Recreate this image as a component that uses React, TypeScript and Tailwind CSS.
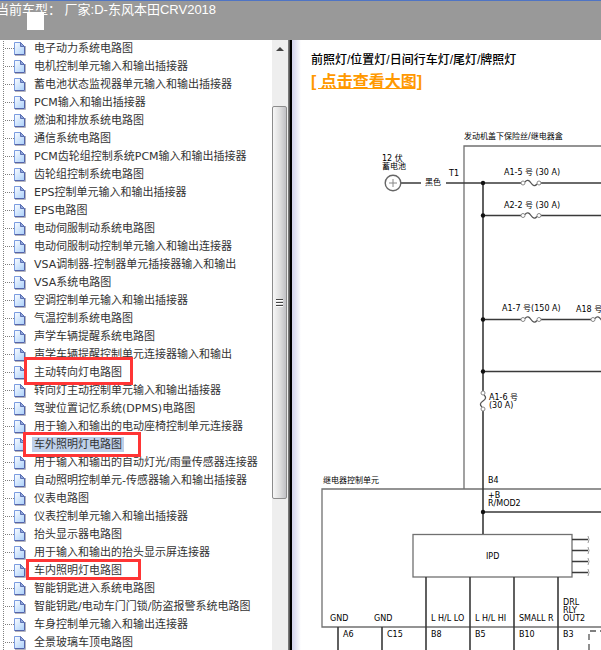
import React, { useState } from "react";
import clsx from "clsx";

type TreeItem = {
  id: number;
  text: string;
  mark?: string;
};

const treeItems: TreeItem[] = [
  { id: 1, text: "电子动力系统电路图" },
  { id: 2, text: "电机控制单元输入和输出插接器" },
  { id: 3, text: "蓄电池状态监视器单元输入和输出插接器" },
  { id: 4, text: "PCM输入和输出插接器" },
  { id: 5, text: "燃油和排放系统电路图" },
  { id: 6, text: "通信系统电路图" },
  { id: 7, text: "PCM齿轮组控制系统PCM输入和输出插接器" },
  { id: 8, text: "齿轮组控制系统电路图" },
  { id: 9, text: "EPS控制单元输入和输出插接器" },
  { id: 10, text: "EPS电路图" },
  { id: 11, text: "电动伺服制动系统电路图" },
  { id: 12, text: "电动伺服制动控制单元输入和输出连接器" },
  { id: 13, text: "VSA调制器-控制器单元插接器输入和输出" },
  { id: 14, text: "VSA系统电路图" },
  { id: 15, text: "空调控制单元输入和输出插接器" },
  { id: 16, text: "气温控制系统电路图" },
  { id: 17, text: "声学车辆提醒系统电路图" },
  { id: 18, text: "声学车辆提醒控制单元连接器输入和输出" },
  {
    id: 19,
    text: "主动转向灯电路图",
    mark: "left-6 -top-1.5 w-[109px] h-7",
  },
  { id: 20, text: "转向灯主动控制单元输入和输出插接器" },
  { id: 21, text: "驾驶位置记忆系统(DPMS)电路图" },
  { id: 22, text: "用于输入和输出的电动座椅控制单元连接器" },
  {
    id: 23,
    text: "车外照明灯电路图",
    mark: "left-[23px] -top-[3px] w-[118px] h-[25px]",
  },
  { id: 24, text: "用于输入和输出的自动灯光/雨量传感器连接器" },
  { id: 25, text: "自动照明控制单元-传感器输入和输出插接器" },
  { id: 26, text: "仪表电路图" },
  { id: 27, text: "仪表控制单元输入和输出插接器" },
  { id: 28, text: "抬头显示器电路图" },
  { id: 29, text: "用于输入和输出的抬头显示屏连接器" },
  {
    id: 30,
    text: "车内照明灯电路图",
    mark: "left-[26px] -top-[2px] w-[115px] h-[21px]",
  },
  { id: 31, text: "智能钥匙进入系统电路图" },
  { id: 32, text: "智能钥匙/电动车门门锁/防盗报警系统电路图" },
  { id: 33, text: "车身控制单元输入和输出连接器" },
  { id: 34, text: "全景玻璃车顶电路图" },
];

const PageIcon: React.FC = () => (
  <svg width="32" height="18" viewBox="0 0 32 18" className="shrink-0">
    <path
      d="M3.5 0V18M5 9.5H14"
      stroke="#808080"
      strokeDasharray="1 1"
      fill="none"
    />
    <path d="M15 16.5H25.5V7" stroke="#b4b4bd" fill="none" />
    <path d="M14.5 3.5H20.5L24.5 7.5V15.5H14.5Z" fill="url(#page)" />
    <path d="M14.5 15.5V3.5H20.5" stroke="#7b9ce0" fill="none" />
    <path d="M20.5 3.5L24.5 7.5V15.5H14.5" stroke="#5364aa" fill="none" />
    <path d="M20.5 3.5V7.5H24.5Z" stroke="#5c70b4" fill="#8fa6da" />
  </svg>
);

const Tree: React.FC = () => {
  const [selected, setSelected] = useState(23);

  return (
    <nav className="min-w-0 flex-1 overflow-hidden">
      <svg width="0" height="0" className="absolute">
        <defs>
          <linearGradient id="page" x1="0" y1="0" x2="1" y2="1">
            <stop offset="0.1" stopColor="#f4f9ff" />
            <stop offset="1" stopColor="#a9cffa" />
          </linearGradient>
        </defs>
      </svg>
      <ul className="-mt-px">
        {treeItems.map((item) => (
          <li key={item.id} className="relative flex h-[18px] items-center">
            <PageIcon />
            <a
              href="#"
              onClick={() => setSelected(item.id)}
              className={clsx(
                "px-0.5 text-[11px] leading-[15px] whitespace-nowrap text-[#333]",
                selected === item.id && "bg-[#bed0ea]"
              )}
            >
              {item.text}
            </a>
            {item.mark && (
              <span
                className={clsx(
                  "pointer-events-none absolute z-10 border-3 border-[#ff3535]",
                  item.mark
                )}
              />
            )}
          </li>
        ))}
      </ul>
    </nav>
  );
};

const ScrollBar: React.FC = () => (
  <div className="flex w-4 shrink-0 flex-col bg-[#eeeeee]">
    <button aria-label="向上滚动" className="flex h-[66px] justify-center pt-[7px]">
      <svg width="8" height="4" viewBox="0 0 8 4">
        <path d="M0 4L4 0L8 4Z" fill="#444" />
      </svg>
    </button>
    <div className="mr-px flex h-[393px] flex-col items-center justify-center gap-px rounded-xs border border-[#8c8c8c] bg-linear-to-r from-[#f7f7f7] via-[#e0e0e0] to-[#c0c0c4]">
      <span className="h-0.5 w-[7px] border-t border-[#444] bg-white" />
      <span className="h-0.5 w-[7px] border-t border-[#444] bg-white" />
      <span className="h-0.5 w-[7px] border-t border-[#444] bg-white" />
    </div>
  </div>
);

type Point = { x: number; y: number };

const Fuse: React.FC<Point & { vertical?: boolean }> = ({ x, y, vertical }) => (
  <g
    transform={`translate(${x} ${y})${vertical ? " rotate(90)" : ""}`}
    fill="none"
    stroke="#888"
  >
    <path d="M2 -1C4 -3.5 6 -3 8 0S12 3.5 14 1" stroke="#555" strokeWidth="1.3" />
    <circle r="2" fill="#fff" />
    <circle cx="16" r="2" fill="#fff" />
  </g>
);

const labels = [
  { x: 464, y: 139, text: "发动机盖下保险丝/继电器盒" },
  { x: 382, y: 161, text: "12 伏" },
  { x: 382, y: 169, text: "蓄电池" },
  { x: 425, y: 185, text: "黑色" },
  { x: 323, y: 483, text: "继电器控制单元" },
  { x: 330, y: 621, text: "GND" },
  { x: 374, y: 621, text: "GND" },
  { x: 431, y: 621, text: "L H/L LO" },
  { x: 475, y: 621, text: "L H/L HI" },
  { x: 519, y: 621, text: "SMALL R" },
  { x: 563, y: 605, text: "DRL" },
  { x: 563, y: 613, text: "RLY" },
  { x: 563, y: 621, text: "OUT2" },
  { x: 343, y: 637, text: "A6" },
  { x: 387, y: 637, text: "C15" },
  { x: 431, y: 637, text: "B8" },
  { x: 475, y: 637, text: "B5" },
  { x: 519, y: 637, text: "B10" },
  { x: 563, y: 637, text: "B3" },
  { x: 488, y: 483, text: "B4" },
  { x: 488, y: 498, text: "+B" },
  { x: 488, y: 506, text: "R/MOD2" },
  { x: 486, y: 559, text: "IPD" },
  { x: 449, y: 176, text: "T1" },
  { x: 504, y: 175, text: "A1-5 号 (30 A)" },
  { x: 504, y: 208, text: "A2-2 号 (30 A)" },
  { x: 502, y: 311, text: "A1-7 号(150 A)" },
  { x: 576, y: 312, text: "A18 号(20 A)" },
  { x: 489, y: 400, text: "A1-6 号" },
  { x: 489, y: 408, text: "(30 A)" },
];

const Diagram: React.FC = () => (
  <svg
    width="600"
    height="600"
    viewBox="311 100 600 600"
    className="mt-1.5 max-w-none"
  >
    {/* housings */}
    <g fill="none" stroke="#707070" strokeWidth="1.3">
      <path d="M464 489V146H880" />
      <path d="M880 489H322V627H880" />
      <rect x="413" y="534.5" width="159" height="42.5" />
    </g>
    <path
      d="M589 690V631H880"
      fill="none"
      stroke="#555"
      strokeWidth="1.3"
      strokeDasharray="6 4"
    />

    {/* wires */}
    <g fill="none" stroke="#3a3a3a" strokeWidth="1.6">
      <path d="M401 183H421M446 183H521M541 183H880" />
      <path d="M483 215.5H521M541 215.5H880" />
      <path d="M483 319.5H521M541 319.5H591M611 319.5H880" />
      <path d="M483 371.5H880M483 512H880" />
      <path d="M483 183V391M483 411V534" />
      <path d="M426 577V690M470 577V690M514 577V690M558 577V690" />
      <path d="M338 627V690M382 627V690" />
      <path d="M572 539.5H588M572 550.5H588M572 561.5H588M572 572.5H588" />
    </g>
    <path
      d="M588 536Q590 539.5 588 543M588 547Q590 550.5 588 554M588 558Q590 561.5 588 565M588 569Q590 572.5 588 576"
      fill="none"
      stroke="#999"
    />

    <g fill="#111">
      <circle cx="483" cy="183" r="2.2" />
      <circle cx="483" cy="215.5" r="2.2" />
      <circle cx="483" cy="319.5" r="2.2" />
      <circle cx="483" cy="371.5" r="2.2" />
      <circle cx="483" cy="512" r="2.2" />
    </g>

    <Fuse x={523} y={183} />
    <Fuse x={523} y={215.5} />
    <Fuse x={523} y={319.5} />
    <Fuse x={593} y={319.5} />
    <Fuse x={483} y={393} vertical />

    {/* battery */}
    <circle cx="393" cy="183" r="7.8" fill="none" stroke="#666" strokeWidth="1.4" />
    <path d="M389 183H397M393 179V187" stroke="#888" />

    <g className="fill-black text-[8px]">
      {labels.map((label) => (
        <text key={`${label.x}-${label.y}`} x={label.x} y={label.y}>
          {label.text}
        </text>
      ))}
    </g>
  </svg>
);

const App: React.FC = () => {
  return (
    <div className="flex h-screen flex-col overflow-hidden bg-white font-['DejaVu_Sans','Noto_Sans_CJK_SC',sans-serif]">
      <header className="relative h-10 shrink-0 overflow-hidden border-t border-[#4f74c4] bg-[#999999]">
        <p className="-ml-1 font-['Liberation_Sans','Noto_Sans_CJK_SC',sans-serif] text-[13px] leading-[18px] whitespace-nowrap text-white">
          当前车型： 厂家:D-东风本田CRV2018
        </p>
        <span className="absolute top-[11px] left-[27px] h-[18px] w-[17px] bg-white" />
      </header>

      <div className="flex min-h-0 flex-1">
        <aside className="flex w-[288px] shrink-0 overflow-hidden">
          <Tree />
          <ScrollBar />
        </aside>
        <div className="w-1 shrink-0 border-r-2 border-l border-r-black border-l-[#777] bg-[#555]" />
        <main className="min-w-0 flex-1 overflow-hidden bg-linear-to-r from-[#d2d2ec] to-white to-[9px] pt-2.5 pl-[19px] font-['DejaVu_Sans','Noto_Sans_CJK_SC',sans-serif]">
          <h1 className="font-['Liberation_Sans','Noto_Sans_CJK_SC',sans-serif] text-xs leading-5 font-medium whitespace-nowrap text-black">
            前照灯/位置灯/日间行车灯/尾灯/牌照灯
          </h1>
          <a
            href="#"
            className="block font-['Liberation_Sans','Noto_Sans_CJK_SC',sans-serif] text-base leading-6 font-bold whitespace-nowrap text-[#ff9900] underline"
          >
            [ 点击查看大图]
          </a>
          <Diagram />
        </main>
      </div>
    </div>
  );
};

export default App;
